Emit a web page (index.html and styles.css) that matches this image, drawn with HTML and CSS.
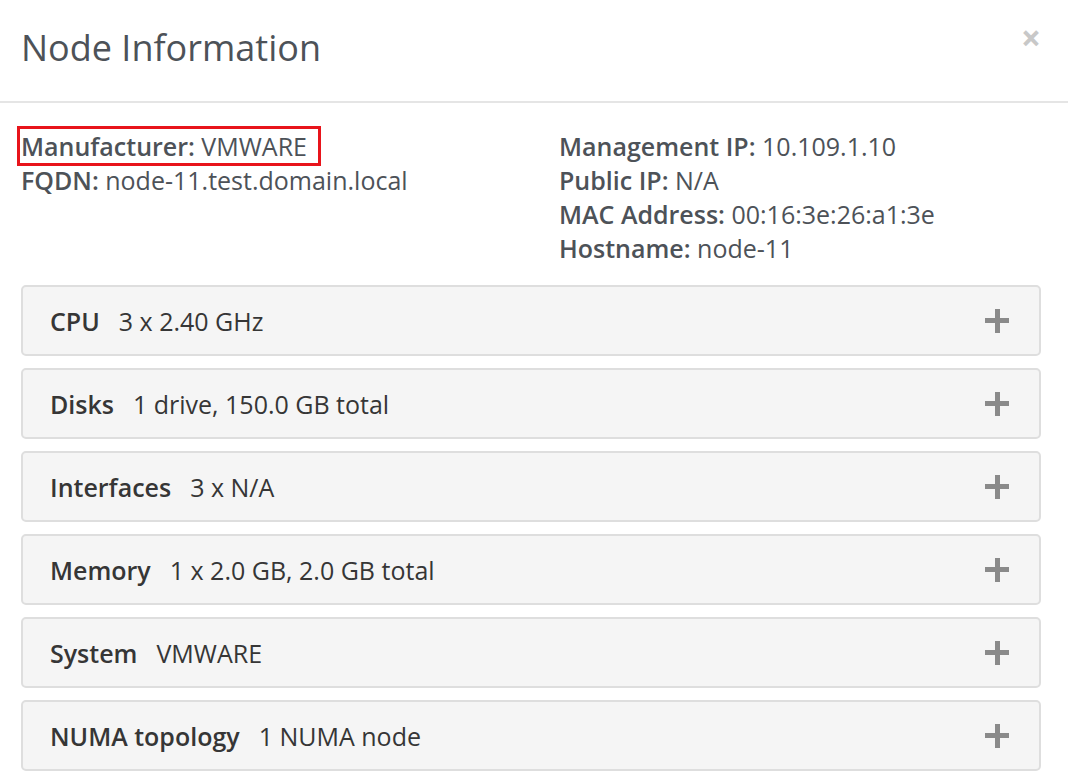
FILE: index.html
```html
<!DOCTYPE html>
<html>
<head>
<meta charset="utf-8">
<link rel="stylesheet" href="styles.css">
</head>
<body>
<div class="modal">
  <div class="modal-header">
    <h1 class="title">Node Information</h1>
    <span class="close">&times;</span>
  </div>
  <div class="modal-body">
    <div class="info">
      <div class="col">
        <div class="row highlight"><b>Manufacturer:</b> VMWARE</div>
        <div class="row"><b>FQDN:</b> node-11.test.domain.local</div>
      </div>
      <div class="col">
        <div class="row"><b>Management IP:</b> 10.109.1.10</div>
        <div class="row"><b>Public IP:</b> N/A</div>
        <div class="row"><b>MAC Address:</b> 00:16:3e:26:a1:3e</div>
        <div class="row"><b>Hostname:</b> node-11</div>
      </div>
    </div>
    <div class="panels">
      <div class="panel"><span class="name">CPU</span><span class="val">3 x 2.40 GHz</span><span class="plus"></span></div>
      <div class="panel"><span class="name">Disks</span><span class="val">1 drive, 150.0 GB total</span><span class="plus"></span></div>
      <div class="panel"><span class="name">Interfaces</span><span class="val">3 x N/A</span><span class="plus"></span></div>
      <div class="panel"><span class="name">Memory</span><span class="val">1 x 2.0 GB, 2.0 GB total</span><span class="plus"></span></div>
      <div class="panel"><span class="name">System</span><span class="val">VMWARE</span><span class="plus"></span></div>
      <div class="panel"><span class="name">NUMA topology</span><span class="val">1 NUMA node</span><span class="plus"></span></div>
    </div>
  </div>
</div>
</body>
</html>
```
FILE: styles.css
```css
* { box-sizing: border-box; }
html, body { margin: 0; padding: 0; background: #fff; }
body { font-family: "Open Sans", "Liberation Sans", sans-serif; color: #4d5258; }
.modal { width: 1068px; }
.modal-header {
  height: 103px;
  border-bottom: 2px solid #e5e5e5;
  display: flex;
  align-items: flex-start;
  justify-content: space-between;
  padding: 0 27px 0 21px;
}
.title {
  margin: 0;
  padding-top: 24px;
  font-size: 36px;
  line-height: 48px;
  font-weight: 400;
  color: #4d5258;
}
.close {
  margin-top: 20px;
  font-size: 35px;
  line-height: 35px;
  font-weight: 700;
  color: #c8c8c8;
}
.modal-body { padding: 26px 27px 0 21px; }
.info { display: grid; grid-template-columns: 538px 1fr; }
.row { font-size: 25px; line-height: 34px; white-space: nowrap; }
.row b { font-weight: 600; }
.highlight { outline: 3px solid #e8141b; outline-offset: 0; width: 298px; margin-left: -1px; padding-left: 1px; }
.panels { display: flex; flex-direction: column; gap: 12px; margin-top: 20px; }
.panel {
  height: 71px;
  background: #f5f5f5;
  border: 2px solid #dedede;
  border-radius: 5px;
  display: flex;
  align-items: center;
  padding: 0 30px 0 27px;
  font-size: 25px;
  color: #363636;
}
.name { font-weight: 600; margin-right: 19px; }
.val { flex: 1; }
.plus { width: 24px; height: 24px; position: relative; }
.plus::before, .plus::after { content: ""; position: absolute; background: #8a8a8a; }
.plus::before { left: 0; right: 0; top: 9.5px; height: 5px; }
.plus::after { top: 0; bottom: 0; left: 9.5px; width: 5px; }
```
